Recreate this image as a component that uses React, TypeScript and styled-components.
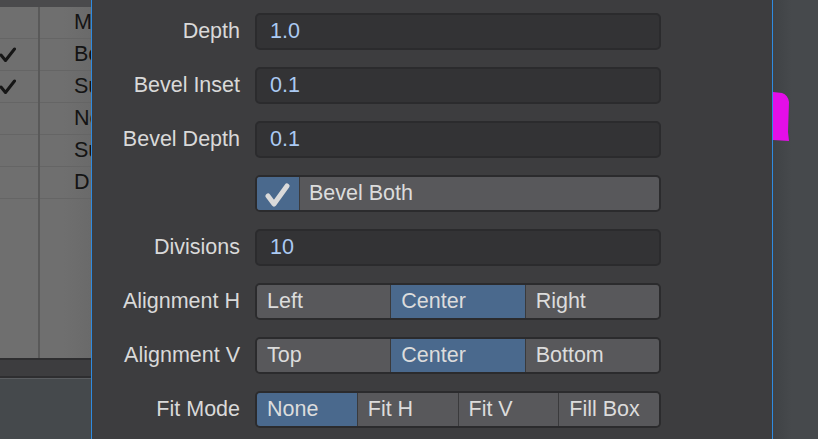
import styled, { createGlobalStyle } from "styled-components";

const Global = createGlobalStyle`
    html, body {
        margin: 0;
        padding: 0;
        width: 818px;
        height: 439px;
        overflow: hidden;
        background: #3d3d3f;
        font-family: "Liberation Sans", Arial, sans-serif;
    }
`;

const Screen = styled.div`
    display: flex;
    width: 818px;
    height: 439px;
`;

/* ---------- left list ---------- */

const ListPane = styled.div`
    width: 91px;
    flex-shrink: 0;
    display: flex;
    flex-direction: column;
    border-right: 1px solid #2f8be0;
    overflow: hidden;
`;

const ListHeader = styled.div`
    height: 7px;
    background: #4a4a4c;
`;

const ListBody = styled.div`
    height: 351px;
    background: linear-gradient(to right, #6f6f6f 70%, #6a6a6a);
    display: flex;
    flex-direction: column;
    position: relative;
`;

const ColumnRule = styled.div`
    position: absolute;
    left: 38px;
    top: 0;
    bottom: 0;
    width: 2px;
    background: #595959;
`;

const ListRow = styled.div`
    height: 31px;
    border-bottom: 1px solid #656565;
    display: flex;
    align-items: center;
    flex-shrink: 0;
`;

const CheckCell = styled.div`
    width: 38px;
    flex-shrink: 0;
    display: flex;
    align-items: center;
`;

const NameCell = styled.div`
    flex-shrink: 0;
    padding-left: 36px;
    font-size: 21.5px;
    color: #141414;
    white-space: nowrap;
`;

const StatusBand = styled.div`
    height: 16px;
    background: #3d3d3f;
    border-top: 2px solid #2e2e30;
    border-bottom: 2px solid #2e2e30;
`;

const BottomArea = styled.div`
    flex: 1;
    background: #45494c;
    border-top: 1px solid #5a5d60;
`;

/* ---------- dialog ---------- */

const Dialog = styled.div`
    width: 680px;
    flex-shrink: 0;
    padding-top: 13px;
    display: flex;
    flex-direction: column;
    gap: 17px;
    background: #3d3d3f;
    border-right: 1px solid #2f8be0;
`;

const Row = styled.div`
    display: flex;
    align-items: center;
    height: 37px;
`;

const Label = styled.div`
    width: 148px;
    margin-right: 15px;
    text-align: right;
    font-size: 21.5px;
    color: #d9d9d9;
    white-space: nowrap;
`;

const Field = styled.div`
    width: 389px;
    height: 33px;
    padding-left: 13px;
    display: flex;
    align-items: center;
    background: #333335;
    border: 2px solid #2b2b2d;
    border-radius: 5px;
    font-size: 21.5px;
    color: #abcaf3;
`;

const Toggle = styled.div`
    width: 402px;
    height: 33px;
    display: flex;
    background: #58585b;
    border: 2px solid #2b2b2d;
    border-radius: 5px;
    overflow: hidden;
`;

const ToggleBox = styled.div`
    width: 42px;
    background: #4a698d;
    border-right: 1px solid #3b3b3d;
    display: flex;
    align-items: center;
    justify-content: center;
`;

const ToggleText = styled.div`
    padding-left: 9px;
    display: flex;
    align-items: center;
    font-size: 21.5px;
    color: #dcdcdc;
`;

const Segments = styled.div`
    width: 402px;
    height: 33px;
    display: flex;
    border: 2px solid #2b2b2d;
    border-radius: 5px;
    overflow: hidden;
    background: #3a3a3c;
    gap: 1px;
`;

const Segment = styled.div<{ $on?: boolean }>`
    flex: 1;
    padding-left: 10px;
    display: flex;
    align-items: center;
    background: ${(p) => (p.$on ? "#4a698d" : "#58585b")};
    font-size: 21.5px;
    color: #dcdcdc;
    white-space: nowrap;
`;

/* ---------- viewport ---------- */

const Viewport = styled.div`
    flex: 1;
    background: linear-gradient(to right, #3f4245, #46494c 40%);
    padding-top: 92px;
`;

const listItems = [
    { name: "M", checked: false },
    { name: "Bo", checked: true },
    { name: "Su", checked: true },
    { name: "No", checked: false },
    { name: "Su", checked: false },
    { name: "D", checked: false },
];

const Tick = () => (
    <svg width="16" height="16" viewBox="0 0 16 16">
        <path d="M1 8 L5.5 13.5 L14.5 2" fill="none" stroke="#161616" strokeWidth="3" strokeLinecap="round" strokeLinejoin="round" />
    </svg>
);

const BigTick = () => (
    <svg width="28" height="26" viewBox="0 0 28 26">
        <path d="M4 15 L10 23 L23 5" fill="none" stroke="#dadada" strokeWidth="5" strokeLinecap="round" strokeLinejoin="round" />
    </svg>
);

const Blob = () => (
    <svg width="17" height="50" viewBox="0 0 17 50">
        <path d="M0 0 L9 1 Q15 3 16 10 L15 40 L16 49 L0 48 Z" fill="#e40ee8" />
    </svg>
);

const numberRows = [
    { label: "Depth", value: "1.0" },
    { label: "Bevel Inset", value: "0.1" },
    { label: "Bevel Depth", value: "0.1" },
];

const App = () => {
    return (
        <>
            <Global />
            <Screen>
                <ListPane>
                    <ListHeader />
                    <ListBody>
                        <ColumnRule />
                        {listItems.map((item, i) => (
                            <ListRow key={i}>
                                <CheckCell>{item.checked && <Tick />}</CheckCell>
                                <NameCell>{item.name}</NameCell>
                            </ListRow>
                        ))}
                    </ListBody>
                    <StatusBand />
                    <BottomArea />
                </ListPane>

                <Dialog>
                    {numberRows.map((r) => (
                        <Row key={r.label}>
                            <Label>{r.label}</Label>
                            <Field>{r.value}</Field>
                        </Row>
                    ))}
                    <Row>
                        <Label />
                        <Toggle>
                            <ToggleBox>
                                <BigTick />
                            </ToggleBox>
                            <ToggleText>Bevel Both</ToggleText>
                        </Toggle>
                    </Row>
                    <Row>
                        <Label>Divisions</Label>
                        <Field>10</Field>
                    </Row>
                    <Row>
                        <Label>Alignment H</Label>
                        <Segments>
                            <Segment>Left</Segment>
                            <Segment $on>Center</Segment>
                            <Segment>Right</Segment>
                        </Segments>
                    </Row>
                    <Row>
                        <Label>Alignment V</Label>
                        <Segments>
                            <Segment>Top</Segment>
                            <Segment $on>Center</Segment>
                            <Segment>Bottom</Segment>
                        </Segments>
                    </Row>
                    <Row>
                        <Label>Fit Mode</Label>
                        <Segments>
                            <Segment $on>None</Segment>
                            <Segment>Fit H</Segment>
                            <Segment>Fit V</Segment>
                            <Segment>Fill Box</Segment>
                        </Segments>
                    </Row>
                </Dialog>

                <Viewport>
                    <Blob />
                </Viewport>
            </Screen>
        </>
    );
};

export default App;
